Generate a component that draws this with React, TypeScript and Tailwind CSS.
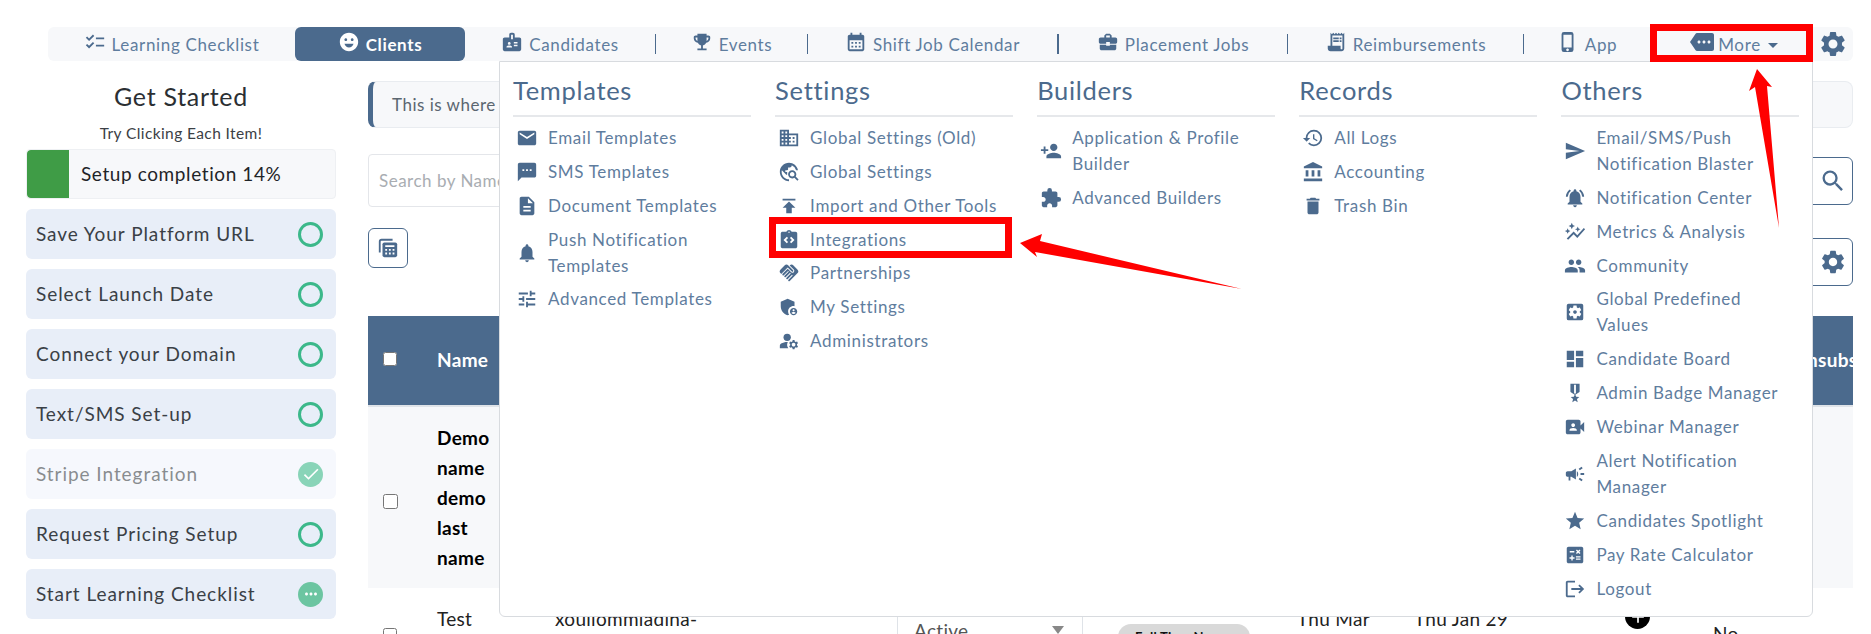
import type { IconType } from "react-icons";
import {
  MdAccountBalance, MdAdd, MdAdminPanelSettings, MdArrowDropDown, MdAutoGraph, MdBadge, MdBusinessCenter,
  MdCalculate, MdCalendarMonth, MdCampaign, MdCheck, MdChecklist, MdDashboard, MdDelete, MdDescription,
  MdDomain, MdEmail, MdEmojiEmotions, MdEmojiEvents, MdExtension, MdHandshake, MdHistory, MdIntegrationInstructions,
  MdLogout, MdManageAccounts, MdMilitaryTech, MdMore, MdMoreHoriz, MdNotifications, MdNotificationsActive, MdPeople,
  MdPersonAdd, MdPhoneIphone, MdPublish, MdReceiptLong, MdSearch, MdSend, MdSettings, MdSettingsApplications,
  MdSms, MdStar, MdTravelExplore, MdTune, MdVideoCameraFront,
} from "react-icons/md";

const NAV = [
  { label: "Learning Checklist", icon: MdChecklist, width: "w-[247px]" },
  { label: "Clients", icon: MdEmojiEmotions, width: "w-[170px]", active: true },
  { label: "Candidates", icon: MdBadge, width: "w-[190px]", sep: "w-px" },
  { label: "Events", icon: MdEmojiEvents, width: "w-[151px]", sep: "w-px" },
  { label: "Shift Job Calendar", icon: MdCalendarMonth, width: "w-[249px]", sep: "w-[2px]" },
  { label: "Placement Jobs", icon: MdBusinessCenter, width: "w-[228px]", sep: "w-px" },
  { label: "Reimbursements", icon: MdReceiptLong, width: "w-[235px]", sep: "w-px" },
  { label: "App", icon: MdPhoneIphone, width: "w-[126px]" },
];

const MENU: { title: string; items: { label: string; icon: IconType }[] }[] = [
  {
    title: "Templates",
    items: [
      { label: "Email Templates", icon: MdEmail },
      { label: "SMS Templates", icon: MdSms },
      { label: "Document Templates", icon: MdDescription },
      { label: "Push Notification Templates", icon: MdNotifications },
      { label: "Advanced Templates", icon: MdTune },
    ],
  },
  {
    title: "Settings",
    items: [
      { label: "Global Settings (Old)", icon: MdDomain },
      { label: "Global Settings", icon: MdTravelExplore },
      { label: "Import and Other Tools", icon: MdPublish },
      { label: "Integrations", icon: MdIntegrationInstructions },
      { label: "Partnerships", icon: MdHandshake },
      { label: "My Settings", icon: MdAdminPanelSettings },
      { label: "Administrators", icon: MdManageAccounts },
    ],
  },
  {
    title: "Builders",
    items: [
      { label: "Application & Profile Builder", icon: MdPersonAdd },
      { label: "Advanced Builders", icon: MdExtension },
    ],
  },
  {
    title: "Records",
    items: [
      { label: "All Logs", icon: MdHistory },
      { label: "Accounting", icon: MdAccountBalance },
      { label: "Trash Bin", icon: MdDelete },
    ],
  },
  {
    title: "Others",
    items: [
      { label: "Email/SMS/Push Notification Blaster", icon: MdSend },
      { label: "Notification Center", icon: MdNotificationsActive },
      { label: "Metrics & Analysis", icon: MdAutoGraph },
      { label: "Community", icon: MdPeople },
      { label: "Global Predefined Values", icon: MdSettingsApplications },
      { label: "Candidate Board", icon: MdDashboard },
      { label: "Admin Badge Manager", icon: MdMilitaryTech },
      { label: "Webinar Manager", icon: MdVideoCameraFront },
      { label: "Alert Notification Manager", icon: MdCampaign },
      { label: "Candidates Spotlight", icon: MdStar },
      { label: "Pay Rate Calculator", icon: MdCalculate },
      { label: "Logout", icon: MdLogout },
    ],
  },
];

const STEPS = [
  { label: "Save Your Platform URL" },
  { label: "Select Launch Date" },
  { label: "Connect your Domain" },
  { label: "Text/SMS Set-up" },
  { label: "Stripe Integration", state: "done" },
  { label: "Request Pricing Setup" },
  { label: "Start Learning Checklist", state: "progress" },
];

function StepStatus({ state }: { state?: string }) {
  if (state === "done") {
    return (
      <span className="flex h-[25px] w-[25px] items-center justify-center rounded-full bg-[#3cb88a] text-white">
        <MdCheck size={20} />
      </span>
    );
  }
  if (state === "progress") {
    return (
      <span className="flex h-[25px] w-[25px] items-center justify-center rounded-full bg-[#6cc5a1] text-white">
        <MdMoreHoriz size={18} />
      </span>
    );
  }
  return <span className="h-[25px] w-[25px] rounded-full border-[3px] border-[#3cb88a]" />;
}

function Sidebar() {
  return (
    <aside className="-mt-px ml-[26px] w-[310px] shrink-0">
      <h2 className="text-center text-[25px] leading-[32px] tracking-[0.7px] text-[#2b2f33]">Get Started</h2>
      <p className="mt-[11px] text-center text-[15.5px] leading-[20px] tracking-[0.4px] text-[#3b4045]">Try Clicking Each Item!</p>
      <div className="mt-[6px] flex h-[50px] items-center overflow-hidden rounded border border-[#eef0f3] bg-[#f7f8fa]">
        <div className="h-full w-[42px] rounded-l bg-[#3f9c46]" />
        <span className="ml-3 text-[19px] tracking-[0.6px] text-[#1f2428]">Setup completion 14%</span>
      </div>
      <div className="mt-[10px] flex flex-col gap-[10px]">
        {STEPS.map((s) => (
          <div
            key={s.label}
            className={`flex h-[50px] items-center justify-between rounded-md pl-[10px] pr-[13px] ${s.state === "done" ? "bg-[#f1f5fc] opacity-60" : "bg-[#e8eef8]"}`}
          >
            <span className="text-[19px] tracking-[0.95px] text-[#3a4046]">{s.label}</span>
            <StepStatus state={s.state} />
          </div>
        ))}
      </div>
    </aside>
  );
}

function StackedCalcIcon() {
  return (
    <svg viewBox="0 0 24 24" width="22" height="22" fill="none" className="text-[#4b6a8d]">
      <path d="M3 17V5a2 2 0 0 1 2-2h12" stroke="currentColor" strokeWidth="2" />
      <rect x="6" y="6" width="16" height="16" rx="2" fill="currentColor" />
      <path d="M9 10h10M9 14h2m2 0h2m2 0h2M9 18h2m2 0h2m2 0h2" stroke="#fff" strokeWidth="2" />
    </svg>
  );
}

function Main() {
  return (
    <main className="ml-[32px] w-[1485px] shrink-0">
      <div className="flex h-[47px] items-center rounded-lg border border-l-[5px] border-[#e9ecf0] border-l-[#4b6a8d] bg-[#f7f8fa] pl-[19px] text-[17px] tracking-[0.5px] text-[#5b6670]">
        This is where you can manage all of your clients
      </div>
      <div className="mt-[26px] flex items-center">
        <div className="flex h-[53px] flex-1 items-center rounded-l border border-[#e4e6ea] pl-[10px] text-[17px] tracking-[0.5px] text-[#a9adb2]">
          Search by Name
        </div>
        <button className="flex h-[48px] w-[41px] items-center justify-center rounded-r-md border border-[#4b6a8d] text-[#4b6a8d]">
          <MdSearch size={28} />
        </button>
      </div>
      <div className="mt-[21px] flex h-[58px] items-start justify-between">
        <button className="flex h-[40px] w-[40px] items-center justify-center rounded-md border border-[#4b6a8d]">
          <StackedCalcIcon />
        </button>
        <button className="mt-[10px] flex h-[48px] w-[41px] items-center justify-center rounded-r-md border border-[#4b6a8d] text-[#4b6a8d]">
          <MdSettings size={28} />
        </button>
      </div>
      <div className="mt-[30px] flex h-[91px] items-center overflow-hidden border-b-2 border-[#dfe3e8] bg-[#4b6a8d] text-[19px] font-bold tracking-[0.3px] text-white">
        <input type="checkbox" readOnly className="-mt-1 ml-[15px] h-[14px] w-[14px]" />
        <span className="ml-[40px]">Name</span>
        <span className="ml-auto w-[60px] whitespace-nowrap">Unsubscribed</span>
      </div>
      <div className="flex h-[181px] items-center bg-[#f7f8fa] text-[19px] font-bold leading-[30px] tracking-[0.3px] text-black">
        <input type="checkbox" readOnly className="ml-[15px] mt-[8px] h-[15px] w-[15px]" />
        <span className="ml-[39px] w-[70px]">Demo name demo last name</span>
      </div>
      <div className="flex pt-[16px] text-[19px] leading-[30px] tracking-[0.3px] text-[#222]">
        <input type="checkbox" readOnly className="ml-[15px] mt-[24px] h-[14px] w-[14px]" />
        <span className="ml-[40px] w-[118px]">Test</span>
        <span className="w-[342px]">xouliommiadina-</span>
        <div className="relative -mt-4 flex h-[80px] w-[186px] border-x border-[#dfe3e8] pl-[16px] pt-[28px] text-[#555]">
          Active
          <span className="absolute right-[18px] top-[38px] h-0 w-0 border-x-[6px] border-t-[8px] border-x-transparent border-t-[#888]" />
        </div>
        <span className="ml-[35px] mt-[20px] flex h-[26px] w-[132px] items-center justify-center rounded-full bg-[#d9d9d9] text-[13px] font-bold text-[#111]">Full Time Nanny</span>
        <span className="ml-[47px] w-[117px]">Thu Mar</span>
        <span className="w-[211px]">Thu Jan 29</span>
        <span className="flex h-[25px] w-[25px] items-center justify-center rounded-full bg-black text-white">
          <MdAdd size={20} />
        </span>
        <span className="ml-[63px] mt-[15px]">No</span>
      </div>
    </main>
  );
}

function DropdownMenu() {
  return (
    <div className="absolute left-[499px] top-[61px] grid h-[556px] w-[1314px] grid-cols-5 gap-x-[24.5px] rounded-b-md border border-[#d8dbdf] bg-white px-[13px] pt-[12px]">
      {MENU.map((col) => (
        <div key={col.title}>
          <h3 className="border-b-2 border-[#e6e8eb] pb-[9px] text-[25.5px] leading-[32px] tracking-[0.7px] text-[#4b6a8d]">{col.title}</h3>
          <ul className="mt-[4px]">
            {col.items.map(({ label, icon: Icon }) => (
              <li key={label} className="flex items-center py-[3.95px] text-[17px] leading-[26px] tracking-[0.65px] text-[#5f7d9e]">
                <span className="flex w-[35px] shrink-0 justify-start pl-[3px] text-[#4b6a8d]">
                  <Icon size={22} />
                </span>
                <span className="max-w-[195px]">{label}</span>
              </li>
            ))}
          </ul>
        </div>
      ))}
    </div>
  );
}

export default function App() {
  return (
    <div className="relative h-[634px] w-[1871px] overflow-hidden bg-white font-['Lato','Noto_Sans',sans-serif]">
      <nav className="ml-[48px] mt-[27px] flex h-[34px] w-[1805px] items-stretch rounded-md bg-[#f7f8fa]">
        {NAV.map(({ label, icon: Icon, width, active, sep }) => (
          <div key={label} className="flex shrink-0 items-center">
            <div
              className={`flex h-full items-center justify-center gap-[6px] pt-px text-[17px] tracking-[0.65px] ${width} ${active ? "rounded-md bg-[#4b6a8d] font-bold text-white" : "text-[#5f7d9e]"}`}
            >
              <span className={`-mt-[5px] ${active ? "text-white" : "text-[#4b6a8d]"}`}>
                <Icon size={22} />
              </span>
              {label}
            </div>
            {sep && <span className={`h-[20px] bg-[#4b6a8d] ${sep}`} />}
          </div>
        ))}
        <div className="flex w-[163px] shrink-0 items-center justify-center gap-[4px] pl-[12px] pt-px text-[17px] tracking-[0.65px] text-[#5f7d9e]">
          <span className="-mt-[5px] text-[#4b6a8d]">
            <MdMore size={24} />
          </span>
          More
          <MdArrowDropDown size={24} className="-ml-1 text-[#4b6a8d]" />
        </div>
        <div className="flex w-[40px] items-center justify-center text-[#4b6a8d]">
          <MdSettings size={30} />
        </div>
      </nav>

      <div className="mt-[20px] flex items-start">
        <Sidebar />
        <Main />
      </div>

      <DropdownMenu />

      {/* red annotations drawn over the screenshot */}
      <div className="absolute left-[1650px] top-[24px] h-[38px] w-[163px] border-[7px] border-[#ff0000]" />
      <div className="absolute left-[769px] top-[217px] h-[41px] w-[243px] border-[7px] border-[#ff0000]" />
      <svg className="absolute left-0 top-0" width="1871" height="634" fill="#ff0000">
        <polygon points="1757,69 1772,87 1767,86 1779,228 1755,87 1749,91" />
        <polygon points="1020,243 1042,234 1040,241 1242,289 1035,252 1037,257" />
      </svg>
    </div>
  );
}
